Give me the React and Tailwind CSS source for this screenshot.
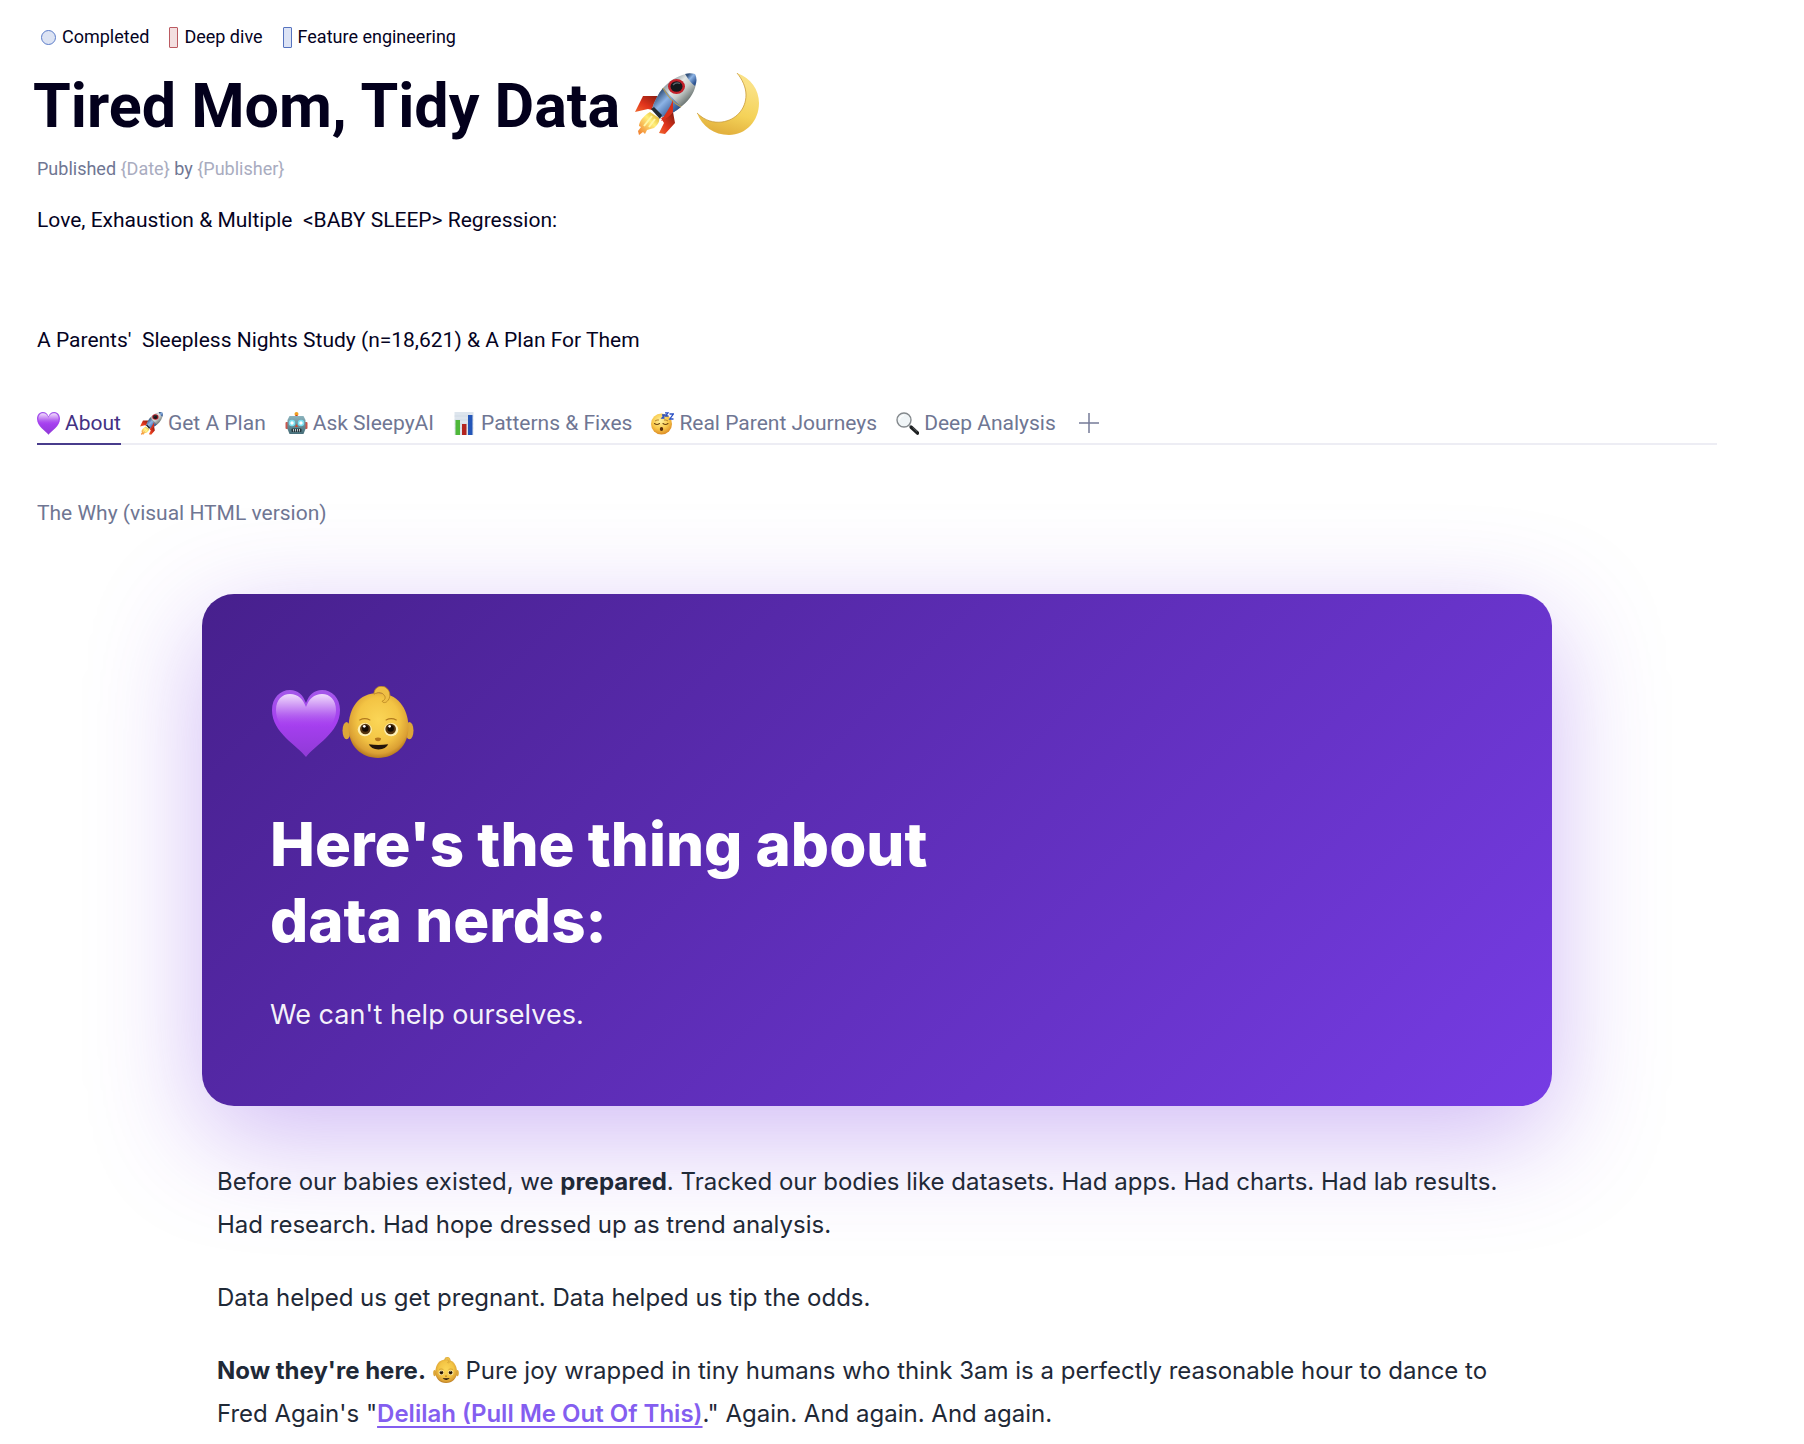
import { useState } from 'react';

// Shared gradients, referenced by id from the emoji drawings
const EmojiDefs = () => (
  <svg className="absolute w-0 h-0" aria-hidden="true">
    <defs>
      <linearGradient id="heart-fill" x1="0" y1="0" x2="0" y2="1">
        <stop offset="0" stopColor="#a458ea" />
        <stop offset="0.5" stopColor="#a63ff0" />
        <stop offset="1" stopColor="#8f3ad6" />
      </linearGradient>
      <linearGradient id="heart-shine" x1="0" y1="0" x2="0" y2="1">
        <stop offset="0" stopColor="#f0dcfc" />
        <stop offset="0.3" stopColor="#c07af2" />
        <stop offset="0.6" stopColor="#a843ee" stopOpacity="0" />
      </linearGradient>
      <radialGradient id="face-fill" cx="0.5" cy="0.42" r="0.58">
        <stop offset="0" stopColor="#fbd657" />
        <stop offset="0.6" stopColor="#f3c444" />
        <stop offset="0.88" stopColor="#dba034" />
        <stop offset="1" stopColor="#b87a20" />
      </radialGradient>
      <radialGradient id="sleepy-fill" cx="0.45" cy="0.35" r="0.65">
        <stop offset="0" stopColor="#fff3a0" />
        <stop offset="0.6" stopColor="#f8c84a" />
        <stop offset="1" stopColor="#dd8c25" />
      </radialGradient>
      <linearGradient id="moon-fill" x1="0.8" y1="0.2" x2="0.6" y2="1">
        <stop offset="0" stopColor="#fae184" />
        <stop offset="0.6" stopColor="#f4d258" />
        <stop offset="1" stopColor="#e3b23f" />
      </linearGradient>
      <linearGradient id="rocket-body" x1="0.25" y1="0.25" x2="0.75" y2="0.75">
        <stop offset="0" stopColor="#7f8b92" />
        <stop offset="0.35" stopColor="#e3e7e6" />
        <stop offset="0.6" stopColor="#c4cac8" />
        <stop offset="1" stopColor="#5b6563" />
      </linearGradient>
      <linearGradient id="rocket-blue" x1="0.2" y1="0.2" x2="0.8" y2="0.8">
        <stop offset="0" stopColor="#36557f" />
        <stop offset="0.4" stopColor="#8db4e6" />
        <stop offset="1" stopColor="#2f5592" />
      </linearGradient>
      <linearGradient id="rocket-fin" x1="0" y1="1" x2="1" y2="0">
        <stop offset="0" stopColor="#f0692f" />
        <stop offset="0.4" stopColor="#e2341c" />
        <stop offset="1" stopColor="#7e1a0e" />
      </linearGradient>
      <linearGradient id="rocket-flame" x1="1" y1="0" x2="0" y2="1">
        <stop offset="0" stopColor="#d9a21f" />
        <stop offset="0.4" stopColor="#fff07a" />
        <stop offset="1" stopColor="#f0772a" />
      </linearGradient>
      <linearGradient id="robot-fill" x1="0" y1="0" x2="0" y2="1">
        <stop offset="0" stopColor="#8bb3bd" />
        <stop offset="1" stopColor="#466d78" />
      </linearGradient>
    </defs>
  </svg>
);

const Heart = ({ className }) => (
  <svg viewBox="0 0 68 68" className={className} aria-hidden="true">
    <path d="M34 67C26 56 0 43 0 20C0 8 8 0 18 0C26 0 31 5 34 13C37 5 42 0 50 0C60 0 68 8 68 20C68 43 42 56 34 67Z" fill="url(#heart-fill)" />
    <path d="M34 60C27 51 4 40 4 20C4 10 10 4 18 4C26 4 31 9 34 17C37 9 42 4 50 4C58 4 64 10 64 20C64 40 41 51 34 60Z" fill="url(#heart-shine)" />
  </svg>
);

const Baby = ({ className }) => (
  <svg viewBox="0 0 70 71" className={className} aria-hidden="true">
    <ellipse cx="4" cy="44" rx="4" ry="8.5" fill="#dda738" />
    <ellipse cx="66" cy="44" rx="4" ry="8.5" fill="#dda738" />
    <path d="M35 7C54 7 65 22 65 41C65 59 52 71 35 71C18 71 6 59 6 41C6 22 16 7 35 7Z" fill="url(#face-fill)" />
    <path d="M31 7C32 1 37 -1 42 1C47 4 48 10 45 14C43 17 40 17 39 15C42 14 43 11 41 9C39 6 35 6 31 8Z" fill="#efbf45" stroke="#b98322" strokeWidth="0.8" />
    <path d="M17 33.500Q22 31 27 33.500M43 33.500Q48 31 53 33.500" fill="none" stroke="#b27a1e" strokeWidth="1.200" strokeLinecap="round" />
    <ellipse cx="22" cy="43" rx="7" ry="6.500" fill="#fdf0b4" />
    <ellipse cx="48" cy="43" rx="7" ry="6.500" fill="#fdf0b4" />
    <circle cx="22.500" cy="42.500" r="5.200" fill="#55350f" />
    <circle cx="47.500" cy="42.500" r="5.200" fill="#55350f" />
    <circle cx="22.500" cy="42" r="3.200" fill="#140b02" />
    <circle cx="47.500" cy="42" r="3.200" fill="#140b02" />
    <circle cx="21.500" cy="39.800" r="1.300" fill="#fff" />
    <circle cx="46.500" cy="39.800" r="1.300" fill="#fff" />
    <path d="M32 51.500Q35 50 38 51.500Q38 54.500 35 54.500Q32 54.500 32 51.500Z" fill="#b4761c" />
    <path d="M26 57.500Q35 59 45 57.500Q43 62.500 35.500 62.500Q28 62.500 26 57.500Z" fill="#23150a" />
  </svg>
);

const Rocket = ({ className }) => (
  <svg viewBox="0 0 62 62" className={className} aria-hidden="true">
    <path d="M15 39C8 43 4 49 4 53L6 54L3 58L4 62L8 59L10 61L12 57L19 55C23 52 25 48 24 45Z" fill="url(#rocket-flame)" />
    <path d="M17 43L9 53M20 46L14 54" stroke="#fff6a6" strokeWidth="2" />
    <path d="M8 23L26 23L17 37L13 36L0 39Z" fill="url(#rocket-fin)" />
    <path d="M38 39L40 50L30 61L24 60L29 50L26 45Z" fill="url(#rocket-fin)" />
    <path d="M60 1C48 -1 36 6 28 15C23 21 19 29 17 36L26 44C33 43 41 38 47 33C57 25 64 12 60 1Z" fill="url(#rocket-body)" />
    <path d="M28 15C23 21 19 29 17 36L26 44C33 43 40 39 46 34Z" fill="url(#rocket-blue)" />
    <path d="M60 1C56 0 53 0 50 1C53 6 57 11 60 13C62 9 62 5 60 1Z" fill="url(#rocket-blue)" />
    <path d="M28 15Q35 28 46 34" fill="none" stroke="#b49b58" strokeWidth="1.200" />
    <path d="M16 36L19 34L27 42L25 46Z" fill="#222a33" />
    <path d="M38 27C35 35 30 41 26 48C31 46 36 42 38 39Z" fill="#d8301b" />
    <ellipse cx="41.500" cy="13.500" rx="8.500" ry="7.500" fill="#c3202a" />
    <ellipse cx="41.500" cy="13.500" rx="6" ry="5.200" fill="#15181c" />
    <path d="M38 12Q41 8.500 45 10.500" fill="none" stroke="#5d676e" strokeWidth="1.200" />
  </svg>
);

const Moon = ({ className }) => (
  <svg viewBox="0 0 62 62" className={className} aria-hidden="true">
    <path d="M40 0C54 5 62 17 62 30C62 48 49 62 32 62C17 62 5 53 0 40C8 48 17 50 25 49C39 47 49 36 49 22C49 14 45 6 40 0Z" fill="url(#moon-fill)" />
    <path d="M40 0C45 6 49 14 49 22C49 36 39 47 25 49C17 50 8 48 0 40" fill="none" stroke="#c99a3a" strokeWidth="0.8" />
  </svg>
);

const Robot = ({ className }) => (
  <svg viewBox="0 0 22 23" className={className} aria-hidden="true">
    <circle cx="11" cy="2" r="2" fill="#f0a020" />
    <rect x="10" y="3" width="2" height="3" fill="#c53b2c" />
    <rect x="0" y="10" width="3" height="7" rx="1" fill="#c8574c" />
    <rect x="19" y="10" width="3" height="7" rx="1" fill="#c8574c" />
    <path d="M4 4H18L20 8V17L18 22H4L2 17V8Z" fill="url(#robot-fill)" />
    <circle cx="6.500" cy="11" r="3.200" fill="#7be0f2" />
    <circle cx="15.500" cy="11" r="3.200" fill="#7be0f2" />
    <circle cx="6.500" cy="11" r="1.700" fill="#fff" />
    <circle cx="15.500" cy="11" r="1.700" fill="#fff" />
    <path d="M11 12L12.500 15H9.500Z" fill="#d2492e" />
    <rect x="6" y="16.500" width="10" height="3.500" rx="1" fill="#23363c" />
    <path d="M8 17V19.500M10 17V19.500M12 17V19.500M14 17V19.500" stroke="#cfd8da" strokeWidth="0.9" />
  </svg>
);

const Chart = ({ className }) => (
  <svg viewBox="0 0 20 23" className={className} aria-hidden="true">
    <rect width="19" height="23" fill="#dde5ed" />
    <path d="M0 4H19M0 8H19M0 12H19M0 16H19" stroke="#c6d1dc" strokeWidth="0.5" />
    <rect x="1" y="8" width="4.500" height="15" fill="#4fb83a" />
    <rect x="7.500" y="12" width="4.500" height="11" fill="#b3241f" />
    <rect x="13.500" y="3" width="4.500" height="20" fill="#2456b8" />
  </svg>
);

const Sleepy = ({ className }) => (
  <svg viewBox="0 0 23 23" className={className} aria-hidden="true">
    <circle cx="10.500" cy="12" r="10.500" fill="url(#sleepy-fill)" />
    <path d="M3.500 11.500Q6 13.500 8.500 11.500M12 11.500Q14.500 13.500 17 11.500" fill="none" stroke="#6d4411" strokeWidth="1.100" strokeLinecap="round" />
    <path d="M4 9Q6 7.500 8 8M13 8Q15 7.500 17 9" fill="none" stroke="#a66d1b" strokeWidth="0.8" />
    <ellipse cx="10.500" cy="17" rx="1.700" ry="2" fill="#5b2f0c" />
    <path d="M11 3H13.500L11 6H13.500M14 0.800H17L14.500 4H17.500M18.500 2H22.300L18.800 7H22.500" fill="none" stroke="#2a4fc4" strokeWidth="1.300" />
  </svg>
);

const Magnifier = ({ className }) => (
  <svg viewBox="0 0 23 23" className={className} aria-hidden="true">
    <path d="M13.500 13.500L16 16" stroke="#8b9094" strokeWidth="2.500" />
    <path d="M15.500 15.500L21.500 21" stroke="#1d1f21" strokeWidth="3.600" strokeLinecap="round" />
    <path d="M16.500 15.300L21 19.500" stroke="#6b7073" strokeWidth="0.8" />
    <circle cx="8" cy="8" r="7" fill="#f0f5f7" stroke="#84898d" strokeWidth="1.400" />
    <path d="M3.500 8Q4 4 8 3.500" fill="none" stroke="#fff" strokeWidth="1.200" />
  </svg>
);

const tags = [
  { label: 'Completed', shape: 'w-[15px] h-[15px] rounded-full bg-[#dce3f3] border-[#5b7cc9]' },
  { label: 'Deep dive', shape: 'w-[9px] h-[21px] rounded-[1px] bg-[#f3dfe0] border-[#bb5a61]' },
  { label: 'Feature engineering', shape: 'w-[9px] h-[21px] rounded-[1px] bg-[#dce3f5] border-[#5673bf]' },
];

const tabs = [
  { label: 'About', Icon: Heart },
  { label: 'Get A Plan', Icon: Rocket },
  { label: 'Ask SleepyAI', Icon: Robot },
  { label: 'Patterns & Fixes', Icon: Chart },
  { label: 'Real Parent Journeys', Icon: Sleepy },
  { label: 'Deep Analysis', Icon: Magnifier },
];

const TabBar = () => {
  const [active, setActive] = useState('About');

  return (
    <div role="tablist" className="flex gap-[19px] mt-[53px] border-b-2 border-[#ededf4] text-[21px] leading-[30px]">
      {tabs.map(({ label, Icon }) => (
        <button
          key={label}
          type="button"
          role="tab"
          aria-selected={active === label}
          onClick={() => setActive(label)}
          className={`flex items-center gap-[5px] pb-[5px] -mb-0.5 border-b-2 whitespace-nowrap ${
            active === label ? 'border-[#483c8c] text-[#433183]' : 'border-transparent text-[#6f7693]'
          }`}
        >
          <Icon className="w-[23px] h-[23px]" />
          {label}
        </button>
      ))}
      <button type="button" aria-label="Add tab" className="pb-[5px] ml-1 text-[#757b98]">
        <svg viewBox="0 0 20 20" className="w-5 h-5" fill="none" stroke="currentColor" strokeWidth="1.500">
          <path d="M10 0V20M0 10H20" />
        </svg>
      </button>
    </div>
  );
};

export default function App() {
  return (
    <main className="min-h-screen bg-white pl-[37px] pr-[87px] pt-[26px] font-[Roboto,sans-serif] text-[#05031f]">
      <EmojiDefs />

      <div className="flex items-center gap-5 pl-1 text-[18px] leading-[22px]">
        {tags.map((tag) => (
          <span key={tag.label} className="flex items-center gap-1.5">
            <span className={`border ${tag.shape}`} />
            {tag.label}
          </span>
        ))}
      </div>

      <h1 className="flex items-center -ml-1 mt-[22px] text-[61px] leading-[72px] font-bold text-[#03001c]">
        Tired Mom, Tidy Data
        <Rocket className="ml-[15px] mb-1 w-[62px] h-[62px]" />
        <Moon className="mb-1 w-[62px] h-[62px]" />
      </h1>

      <p className="mt-[15px] text-[18px] leading-6 text-[#6f7693]">
        Published <span className="text-[#a9acc0]">{'{Date}'}</span> by{' '}
        <span className="text-[#a9acc0]">{'{Publisher}'}</span>
      </p>

      <p className="mt-6 text-[21px] leading-[30px] whitespace-pre-wrap">
        {'Love, Exhaustion & Multiple  <BABY SLEEP> Regression:'}
      </p>
      <p className="mt-[90px] text-[21px] leading-[30px] whitespace-pre-wrap">
        {"A Parents'  Sleepless Nights Study (n=18,621) & A Plan For Them"}
      </p>

      <TabBar />

      <p className="mt-[53px] text-[21px] leading-[30px] text-[#6f7693]">The Why (visual HTML version)</p>

      <article className="mt-[66px] mx-auto max-w-[1350px] font-[Inter,sans-serif] text-[#1f2937]">
        <section className="rounded-[32px] px-[68px] pt-[92px] pb-[68px] bg-[linear-gradient(135deg,#47208d,#763ce4)] text-white shadow-[0_30px_108px_rgba(118,54,225,0.34)]">
          <div className="flex mb-12">
            <Heart className="w-[72px] h-[72px] pt-1 px-px" />
            <Baby className="w-[72px] h-[72px]" />
          </div>
          <h2 className="max-w-[760px] text-[60px] leading-[76px] font-extrabold">
            Here's the thing about data nerds:
          </h2>
          <p className="mt-[34px] text-[27px] leading-[46px] text-white/95">We can't help ourselves.</p>
        </section>

        <div className="flex flex-col gap-[30px] mt-[54px] px-[15px] text-[24px] leading-[43px]">
          <p>
            Before our babies existed, we <strong>prepared</strong>. Tracked our bodies like datasets. Had apps.
            Had charts. Had lab results. Had research. Had hope dressed up as trend analysis.
          </p>
          <p>Data helped us get pregnant. Data helped us tip the odds.</p>
          <p>
            <strong>Now they're here.</strong> <Baby className="inline w-[26px] h-[26px] align-[-4px]" /> Pure joy
            wrapped in tiny humans who think 3am is a perfectly reasonable hour to dance to Fred Again's "
            <a href="#delilah" className="font-semibold text-[#845ef0] underline decoration-2 underline-offset-4">
              Delilah (Pull Me Out Of This)
            </a>
            ." Again. And again. And again.
          </p>
        </div>
      </article>
    </main>
  );
}
